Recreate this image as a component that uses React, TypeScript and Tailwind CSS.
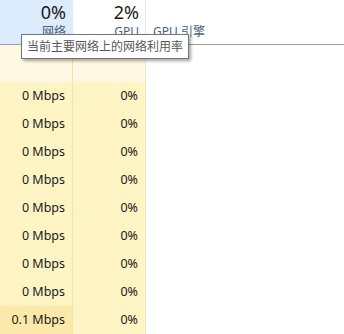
import React from "react";

const rows = ["0 Mbps", "0 Mbps", "0 Mbps", "0 Mbps", "0 Mbps", "0 Mbps", "0 Mbps", "0 Mbps", "0.1 Mbps"];

export default function App() {
  return (
    <div
      className="relative w-[344px] h-[334px] overflow-hidden bg-white"
      style={{ fontFamily: '"Noto Sans", "Noto Sans CJK SC", sans-serif' }}
    >
      {/* header */}
      <div className="flex h-[45px] border-b border-[#a0a0a0]">
        <div className="w-[73px] shrink-0 bg-[#dcecfc] border-r border-[#dcecfc] flex flex-col items-end pr-[6px]">
          <div className="text-[18px] leading-[22px] mt-[1px] text-[#1a1a1a]">0%</div>
          <div className="text-[12px] leading-[16px] mt-[1px] text-[#4c607a]">网络</div>
        </div>
        <div className="w-[73px] shrink-0 border-r border-[#e6e6e6] flex flex-col items-end pr-[6px]">
          <div className="text-[18px] leading-[22px] mt-[1px] text-[#1a1a1a]">2%</div>
          <div className="text-[12px] leading-[16px] mt-[1px] text-[#4c607a]">GPU</div>
        </div>
        <div className="flex-1 flex flex-col pl-[7px]">
          <div className="h-[22px] mt-[1px]" />
          <div className="text-[12px] leading-[16px] mt-[1px] text-[#4c607a]">GPU 引擎</div>
        </div>
      </div>

      {/* group header row */}
      <div className="flex h-[37px]">
        <div className="w-[73px] shrink-0 bg-[#fff8e3] border-r border-[#f2e2b0]" />
        <div className="w-[73px] shrink-0 bg-[#fff8e3] border-r border-[#f2e6c4]" />
        <div className="flex-1" />
      </div>

      {rows.map((r, i) => (
        <div key={i} className="flex h-[28px] text-[12.5px] text-[#1a1a1a]">
          <div
            className={
              "w-[73px] shrink-0 border-r border-[#f2e2b0] flex items-center justify-end pr-[7px] " +
              (i === rows.length - 1 ? "bg-[#fae9a9]" : "bg-[#fff4c4]")
            }
          >
            {r}
          </div>
          <div className="w-[73px] shrink-0 bg-[#fff4c4] border-r border-[#f2e6c4] flex items-center justify-end pr-[7px]">
            0%
          </div>
          <div className="flex-1" />
        </div>
      ))}

      {/* tooltip */}
      <div className="absolute left-[21px] top-[34px] h-[25px] border border-[#767676] bg-white px-[5px] flex items-center text-[12px] text-[#575757] shadow-[2px_2px_3px_rgba(0,0,0,0.35)]">
        当前主要网络上的网络利用率
      </div>
    </div>
  );
}
